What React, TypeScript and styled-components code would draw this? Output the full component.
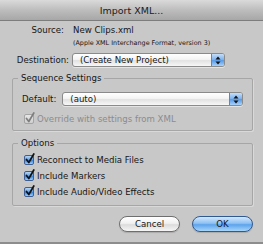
import * as React from "react";
import styled, { createGlobalStyle } from "styled-components";

const GlobalStyle = createGlobalStyle`
	html, body {
		margin: 0;
		padding: 0;
		background: #c8c8c8;
	}
	body {
		font-family: "DejaVu Sans", sans-serif;
		color: #161616;
	}
`;

const Window = styled.div`
	width: 263px;
	height: 244px;
	box-sizing: border-box;
	background: #c8c8c8;
	display: flex;
	flex-direction: column;
	border-bottom: 2px solid #8d8d8d;
	overflow: hidden;
`;

const TitleBar = styled.div`
	height: 20px;
	flex: none;
	display: flex;
	align-items: center;
	justify-content: center;
	font-size: 9.5px;
	color: #202020;
	background: linear-gradient(#dadada, #bdbdbd 50%, #a7a7a7);
	border-bottom: 1px solid #7d7d7d;
`;

const Body = styled.div`
	display: flex;
	flex-direction: column;
	padding: 3px 10px 0 12px;
`;

const Row = styled.div<{ $top?: number }>`
	display: flex;
	align-items: center;
	margin-top: ${(p) => p.$top ?? 0}px;
`;

const Label = styled.span<{ $width?: number; $gap: number }>`
	width: ${(p) => (p.$width ? `${p.$width}px` : "auto")};
	margin-left: ${(p) => (p.$width ? "-12px" : "0")};
	margin-right: ${(p) => p.$gap}px;
	text-align: right;
	font-size: 8.6px;
	line-height: 12px;
	white-space: nowrap;
	flex: none;
`;

const Value = styled.span`
	font-size: 8.6px;
	line-height: 12px;
`;

const Note = styled.div`
	margin-left: 61px;
	margin-top: 3px;
	font-size: 6.4px;
	line-height: 8px;
	white-space: nowrap;
`;

const Popup = styled.div<{ $width: number }>`
	width: ${(p) => p.$width}px;
	height: 14px;
	box-sizing: border-box;
	display: flex;
	align-items: stretch;
	border: 1px solid #8a8a8a;
	border-radius: 3px;
	overflow: hidden;
	background: linear-gradient(#ffffff, #f4f4f4 45%, #e2e2e2 55%, #f7f7f7);
	box-shadow: 0 1px 0 rgba(255, 255, 255, 0.5);
`;

const PopupText = styled.span`
	flex: 1;
	padding-left: 7px;
	font-size: 8.6px;
	line-height: 12px;
	white-space: nowrap;
`;

const PopupArrows = styled.span`
	width: 12px;
	display: flex;
	align-items: center;
	justify-content: center;
	border-left: 1px solid #5f86b6;
	background: linear-gradient(#c4defa, #7fb4ee 45%, #5a9be6 55%, #a9d2fa);
`;

const Group = styled.fieldset<{ $top: number }>`
	margin: ${(p) => p.$top}px 0 0 0;
	padding: 0 0 0 9px;
	border: 1px solid #a6a6a6;
	border-radius: 2px;
	box-shadow: 1px 1px 0 #d9d9d9;
	min-width: 0;
	display: flex;
	flex-direction: column;
`;

const Legend = styled.legend`
	margin-left: -4px;
	padding: 0 3px;
	font-size: 8.6px;
	line-height: 12px;
`;

const CheckRow = styled.div<{ $disabled?: boolean; $mt?: number; $mb?: number }>`
	display: flex;
	align-items: center;
	height: 16px;
	margin: ${(p) => p.$mt ?? 0}px 0 ${(p) => p.$mb ?? 0}px 2px;
	font-size: 8.6px;
	color: ${(p) => (p.$disabled ? "#8c8c8c" : "#161616")};
	white-space: nowrap;
`;

const Box = styled.span<{ $disabled?: boolean }>`
	width: 8px;
	height: 8px;
	margin-right: 3px;
	flex: none;
	position: relative;
	border-radius: 2px;
	border: 1px solid ${(p) => (p.$disabled ? "#a4a4a4" : "#3d5f94")};
	background: ${(p) =>
		p.$disabled
			? "linear-gradient(#e6e6e6, #cfcfcf)"
			: "linear-gradient(#b7d6f6, #5d9de6 50%, #3a86df 55%, #9fcdf7)"};
`;

const CheckMark = styled.svg`
	position: absolute;
	left: 0;
	top: -3px;
`;

const Footer = styled.div`
	display: flex;
	justify-content: flex-end;
	gap: 12px;
	margin-top: 10px;
`;

const Button = styled.div<{ $primary?: boolean }>`
	width: 61px;
	height: 16px;
	box-sizing: border-box;
	border-radius: 8px;
	display: flex;
	align-items: center;
	justify-content: center;
	font-size: 8.6px;
	border: 1px solid ${(p) => (p.$primary ? "#30598f" : "#6e6e6e")};
	background: ${(p) =>
		p.$primary
			? "linear-gradient(#d2e8fd, #8fc1f3 45%, #5da3ec 55%, #a6d6fb)"
			: "linear-gradient(#ffffff, #f1f1f1 45%, #dcdcdc 55%, #f6f6f6)"};
	box-shadow: 0 1px 1px rgba(0, 0, 0, 0.15);
`;

const Arrows = () => (
	<svg width="6" height="9" viewBox="0 0 6 9">
		<path d="M3 0.5 L5.5 3.5 H0.5 Z" fill="#111" />
		<path d="M3 8.5 L5.5 5.5 H0.5 Z" fill="#111" />
	</svg>
);

const Check: React.FC<{ disabled?: boolean }> = ({ disabled }) => (
	<Box $disabled={disabled}>
		<CheckMark width="10" height="11" viewBox="0 0 10 11">
			<path
				d="M1.5 6.5 L3.8 9.5 L8.8 1"
				fill="none"
				stroke={disabled ? "#7e7e7e" : "#111"}
				strokeWidth="1.7"
				strokeLinecap="round"
				strokeLinejoin="round"
			/>
		</CheckMark>
	</Box>
);

const App: React.FC = () => {
	return (
		<Window>
			<GlobalStyle />
			<TitleBar>Import XML...</TitleBar>
			<Body>
				<Row>
					<Label $width={64} $gap={9}>
						Source:
					</Label>
					<Value>New Clips.xml</Value>
				</Row>
				<Note>(Apple XML Interchange Format, version 3)</Note>
				<Row $top={6}>
					<Label $width={69} $gap={3}>
						Destination:
					</Label>
					<Popup $width={153}>
						<PopupText>(Create New Project)</PopupText>
						<PopupArrows>
							<Arrows />
						</PopupArrows>
					</Popup>
				</Row>

				<Group $top={5}>
					<Legend>Sequence Settings</Legend>
					<Row $top={8}>
						<Label $gap={6}>Default:</Label>
						<Popup $width={181}>
							<PopupText>(auto)</PopupText>
							<PopupArrows>
								<Arrows />
							</PopupArrows>
						</Popup>
					</Row>
					<CheckRow $disabled $mt={5} $mb={3}>
						<Check disabled />
						Override with settings from XML
					</CheckRow>
				</Group>

				<Group $top={6}>
					<Legend>Options</Legend>
					<CheckRow $mt={3}>
						<Check />
						Reconnect to Media Files
					</CheckRow>
					<CheckRow>
						<Check />
						Include Markers
					</CheckRow>
					<CheckRow $mb={5}>
						<Check />
						Include Audio/Video Effects
					</CheckRow>
				</Group>

				<Footer>
					<Button>Cancel</Button>
					<Button $primary>OK</Button>
				</Footer>
			</Body>
		</Window>
	);
};

export default App;
